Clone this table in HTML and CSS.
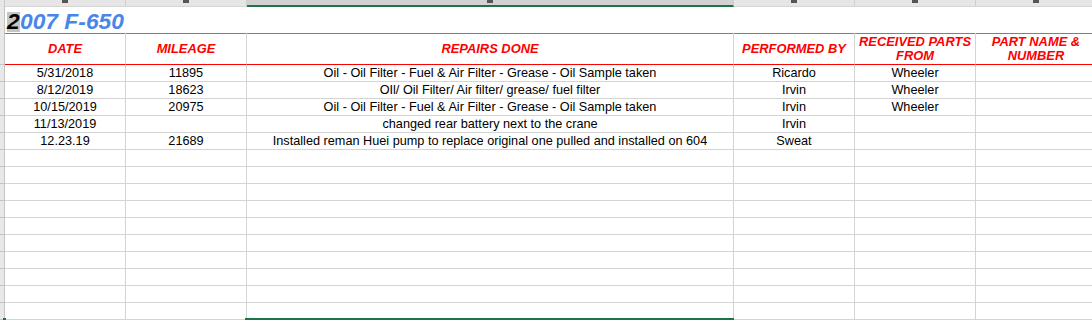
FILE: index.html
```html
<!DOCTYPE html>
<html>
<head>
<meta charset="utf-8">
<link rel="stylesheet" href="styles.css">
</head>
<body>
<div class="sheet">
  <div class="row colhead">
    <div class="corner"></div>
    <div class="ch"><span class="mark"></span></div>
    <div class="ch"><span class="mark"></span></div>
    <div class="ch sel"><span class="mark"></span></div>
    <div class="ch"><span class="mark"></span></div>
    <div class="ch"><span class="mark"></span></div>
    <div class="ch"><span class="mark"></span></div>
  </div>
  <div class="row title-row">
    <div class="rh"></div>
    <div class="title"><span class="cursor">2</span>007 F-650</div>
  </div>
  <div class="row head-row">
    <div class="rh"></div>
    <div class="hc">DATE</div>
    <div class="hc">MILEAGE</div>
    <div class="hc">REPAIRS DONE</div>
    <div class="hc">PERFORMED BY</div>
    <div class="hc">RECEIVED PARTS<br>FROM</div>
    <div class="hc">PART NAME &amp;<br>NUMBER</div>
  </div>
  <div class="row data">
    <div class="rh"></div><div class="c">5/31/2018</div><div class="c">11895</div><div class="c">Oil - Oil Filter - Fuel &amp; Air Filter - Grease - Oil Sample taken</div><div class="c">Ricardo</div><div class="c">Wheeler</div><div class="c"></div>
  </div>
  <div class="row data">
    <div class="rh"></div><div class="c">8/12/2019</div><div class="c">18623</div><div class="c">OIl/ Oil Filter/ Air filter/ grease/ fuel filter</div><div class="c">Irvin</div><div class="c">Wheeler</div><div class="c"></div>
  </div>
  <div class="row data">
    <div class="rh"></div><div class="c">10/15/2019</div><div class="c">20975</div><div class="c">Oil - Oil Filter - Fuel &amp; Air Filter - Grease - Oil Sample taken</div><div class="c">Irvin</div><div class="c">Wheeler</div><div class="c"></div>
  </div>
  <div class="row data">
    <div class="rh"></div><div class="c">11/13/2019</div><div class="c"></div><div class="c">changed rear battery next to the crane</div><div class="c">Irvin</div><div class="c"></div><div class="c"></div>
  </div>
  <div class="row data">
    <div class="rh"></div><div class="c">12.23.19</div><div class="c">21689</div><div class="c">Installed reman Huei pump to replace original one pulled and installed on 604</div><div class="c">Sweat</div><div class="c"></div><div class="c"></div>
  </div>
  <div class="row data"><div class="rh"></div><div class="c"></div><div class="c"></div><div class="c"></div><div class="c"></div><div class="c"></div><div class="c"></div></div>
  <div class="row data"><div class="rh"></div><div class="c"></div><div class="c"></div><div class="c"></div><div class="c"></div><div class="c"></div><div class="c"></div></div>
  <div class="row data"><div class="rh"></div><div class="c"></div><div class="c"></div><div class="c"></div><div class="c"></div><div class="c"></div><div class="c"></div></div>
  <div class="row data"><div class="rh"></div><div class="c"></div><div class="c"></div><div class="c"></div><div class="c"></div><div class="c"></div><div class="c"></div></div>
  <div class="row data"><div class="rh"></div><div class="c"></div><div class="c"></div><div class="c"></div><div class="c"></div><div class="c"></div><div class="c"></div></div>
  <div class="row data"><div class="rh"></div><div class="c"></div><div class="c"></div><div class="c"></div><div class="c"></div><div class="c"></div><div class="c"></div></div>
  <div class="row data"><div class="rh"></div><div class="c"></div><div class="c"></div><div class="c"></div><div class="c"></div><div class="c"></div><div class="c"></div></div>
  <div class="row data"><div class="rh"></div><div class="c"></div><div class="c"></div><div class="c"></div><div class="c"></div><div class="c"></div><div class="c"></div></div>
  <div class="row data"><div class="rh"></div><div class="c"></div><div class="c"></div><div class="c"></div><div class="c"></div><div class="c"></div><div class="c"></div></div>
  <div class="row data"><div class="rh"></div><div class="c"></div><div class="c"></div><div class="c"></div><div class="c"></div><div class="c"></div><div class="c"></div></div>
  <div class="sel-bottom"></div>
  <div class="row-mark"></div>
</div>
</body>
</html>
```

FILE: styles.css
```css
* { box-sizing: border-box; }
html, body { margin: 0; padding: 0; background: #fff; overflow: hidden; }
body { width: 1092px; height: 320px; font-family: "Liberation Sans", Arial, sans-serif; }

.sheet { position: relative; width: 1092px; height: 320px; overflow: hidden; }

.row {
  display: grid;
  grid-template-columns: 5px 121px 121px 487px 121px 121px 121px;
}

/* column header strip */
.colhead { height: 7px; }
.corner { background: #e6e6e6; border-right: 1px solid #c8c8c8; }
.ch {
  background: #e6e6e6;
  border-right: 1px solid #cfcfcf;
  border-bottom: 1px solid #d6d6d6;
  display: flex;
  justify-content: center;
  align-items: flex-start;
}
.ch.sel { background: #d2d2d2; border-bottom: 2px solid #217346; }
.mark { width: 6px; height: 3px; background: #555; }

/* row header strip */
.rh {
  background: #e8e8e8;
  border-right: 1px solid #c4c4c4;
  border-bottom: 1px solid #c4c4c4;
}

/* title */
.title-row { height: 26px; }
.title-row .rh { border-bottom: none; }
.title {
  grid-column: 2 / -1;
  border-bottom: 1px solid #4a86e8;
  padding: 2px 0 0 2px;
  font-weight: bold;
  font-style: italic;
  font-size: 22.8px;
  line-height: 24px;
  color: #4a86e8;
  white-space: nowrap;
}
.cursor {
  display: inline-block;
  background: #c4c4c4;
  color: #000;
  height: 20px;
  line-height: 19px;
  width: 13px;
  vertical-align: baseline;
}

/* column headings */
.head-row { height: 32px; }
.head-row .rh { border-bottom: 1px solid #c4c4c4; }
.hc {
  border-right: 1px solid #d4d4d4;
  border-bottom: 1px solid #ff0000;
  display: flex;
  align-items: center;
  justify-content: center;
  text-align: center;
  color: #ff0000;
  font-weight: bold;
  font-style: italic;
  font-size: 12.9px;
  line-height: 14px;
  padding-top: 1px;
}

/* data */
.data { height: 17px; }
.c {
  border-right: 1px solid #d4d4d4;
  border-bottom: 1px solid #d4d4d4;
  text-align: center;
  font-size: 12.7px;
  line-height: 16px;
  color: #000;
  white-space: nowrap;
}

/* selection overlays */
.sel-bottom {
  position: absolute;
  left: 245px;
  top: 318px;
  width: 489px;
  height: 2px;
  background: #217346;
}
.row-mark {
  position: absolute;
  left: 3px;
  top: 318px;
  width: 3px;
  height: 2px;
  background: #217346;
}
```
